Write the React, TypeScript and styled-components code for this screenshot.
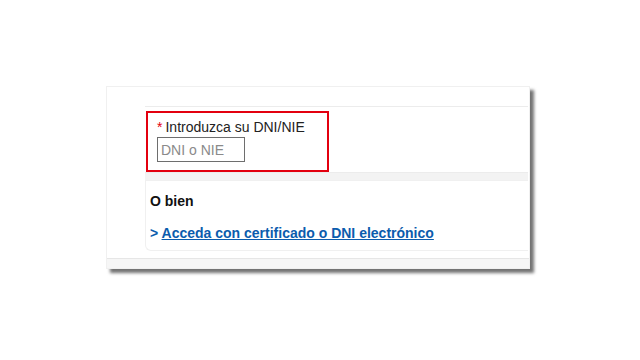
import React from "react";
import styled, { createGlobalStyle } from "styled-components";

const Global = createGlobalStyle`
  html, body { margin: 0; padding: 0; background: #ffffff; }
  body { font-family: "Liberation Sans", Arial, sans-serif; }
`;

const Page = styled.div`
  width: 640px;
  height: 360px;
  box-sizing: border-box;
  padding: 86px 0 0 106px;
  background: #ffffff;
`;

const Card = styled.div`
  width: 424px;
  height: 183px;
  box-sizing: border-box;
  background: #ffffff;
  border: 1px solid #f0f0f0;
  box-shadow: 4px 4px 3px rgba(0, 0, 0, 0.55);
  display: flex;
  flex-direction: column;
  padding: 19px 1px 0 38px;
`;

const Section = styled.div`
  height: 67px;
  box-sizing: border-box;
  border-top: 1px solid #ececec;
  border-bottom: 1px solid #ececec;
  padding: 4px 0 0 1px;
`;

const RedBox = styled.div`
  width: 183px;
  height: 61px;
  box-sizing: border-box;
  border: 2px solid #e3000f;
  padding: 6px 0 0 9px;
  display: flex;
  flex-direction: column;
  gap: 2px;
`;

const Label = styled.div`
  font-size: 14px;
  color: #222;
  line-height: 16px;
`;

const Star = styled.span`
  color: #e3000f;
  margin-right: 3px;
`;

const Input = styled.input`
  width: 88px;
  height: 25px;
  box-sizing: border-box;
  border: 1px solid #6e6e6e;
  padding: 0 3px;
  font-family: "Liberation Sans", Arial, sans-serif;
  font-size: 14px;
  color: #333;
  outline: none;
  &::placeholder { color: #8a8a8a; }
`;

const Band = styled.div`
  height: 7px;
  background: #f3f3f3;
`;

const Section2 = styled.div`
  height: 71px;
  box-sizing: border-box;
  border: 1px solid #f0f0f0;
  border-right: none;
  border-radius: 0 0 0 6px;
  padding: 12px 0 0 4px;
  display: flex;
  flex-direction: column;
  gap: 16px;
`;

const Heading = styled.div`
  font-size: 14px;
  font-weight: bold;
  color: #111;
  line-height: 16px;
`;

const LinkRow = styled.div`
  font-size: 14px;
  font-weight: bold;
  line-height: 16px;
  color: #0b5cad;
`;

const Link = styled.a`
  color: #0b5cad;
  text-decoration: underline;
  cursor: pointer;
`;

const Footer = styled.div`
  margin: 7px -1px 0 -38px;
  flex: 1;
  border-top: 1px solid #e6e6e6;
  background: #f6f6f6;
`;

export default function App() {
  return (
    <>
      <Global />
      <Page>
        <Card>
          <Section>
            <RedBox>
              <Label>
                <Star>*</Star>Introduzca su DNI/NIE
              </Label>
              <Input placeholder="DNI o NIE" />
            </RedBox>
          </Section>
          <Band />
          <Section2>
            <Heading>O bien</Heading>
            <LinkRow>
              &gt; <Link>Acceda con certificado o DNI electrónico</Link>
            </LinkRow>
          </Section2>
          <Footer />
        </Card>
      </Page>
    </>
  );
}
